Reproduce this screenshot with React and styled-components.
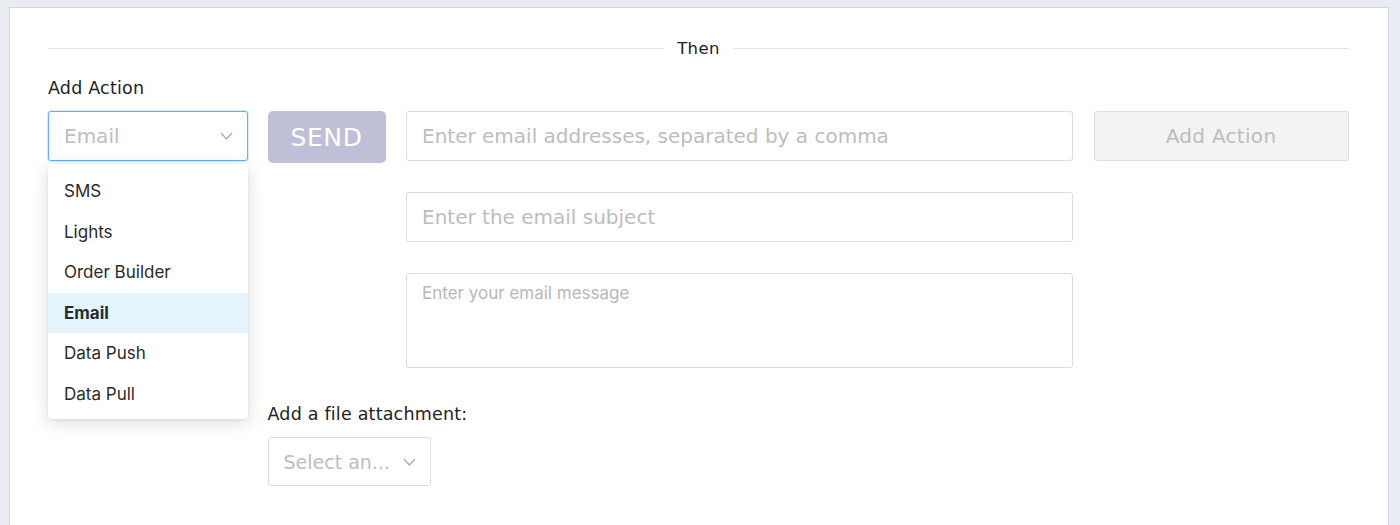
import React from "react";
import styled, { createGlobalStyle } from "styled-components";

const GlobalStyle = createGlobalStyle`
  body {
    margin: 0;
    background: #e9ecf2;
    font-family: "DejaVu Sans", "Open Sans", sans-serif;
  }
  * { box-sizing: border-box; }
`;

const Page = styled.div`
  padding: 7px 11px 0 9px;
  height: 525px;
  overflow: hidden;
`;

const Panel = styled.div`
  background: #fff;
  border: 1px solid #d2d3e5;
  border-bottom: none;
  min-height: 600px;
  padding: 30px 39px 0 38px;
`;

const Divider = styled.div`
  display: flex;
  align-items: center;
  gap: 13px;
  height: 20px;
  margin-bottom: 20px;
  font-size: 16.5px;
  letter-spacing: 0.4px;
  color: #222;
  &::before,
  &::after {
    content: "";
    flex: 1;
    height: 1px;
    background: #e3e3e6;
  }
`;

const Label = styled.div`
  font-size: 17.5px;
  line-height: 20px;
  letter-spacing: 0.2px;
  color: #222;
  margin-bottom: 13px;
`;

const Grid = styled.div`
  display: grid;
  grid-template-columns: 200px 117px 667px 255px;
  grid-template-rows: 50px 50px 95px auto;
  column-gap: 20.5px;
  row-gap: 31px;
  align-items: start;
`;

const SelectBox = styled.div`
  position: relative;
  width: ${(p) => p.width || "100%"};
  height: ${(p) => p.height || 50}px;
  display: flex;
  align-items: center;
  justify-content: space-between;
  padding: 0 14px 0 15px;
  border: 1px solid ${(p) => (p.focused ? "#62b0f4" : "#dcdcdc")};
  border-radius: 3px;
  box-shadow: ${(p) => (p.focused ? "0 0 0 1px rgba(98,176,244,0.25)" : "none")};
  background: #fff;
  font-size: ${(p) => p.size || 20}px;
  color: #bdbdbd;
  white-space: nowrap;
`;

const Chevron = () => (
  <svg width="13" height="8" viewBox="0 0 13 8" fill="none">
    <path d="M1 1l5.5 6L12 1" stroke="#a8a8a8" strokeWidth="1.2" />
  </svg>
);

const SendButton = styled.button`
  height: 52px;
  margin-left: -1px;
  border: none;
  border-radius: 5px;
  background: #bfc0d7;
  color: #fff;
  font-family: inherit;
  font-size: 25px;
  letter-spacing: 0.6px;
  padding: 0;
`;

const TextInput = styled.input`
  grid-column: 3;
  height: 50px;
  width: 100%;
  border: 1px solid #dcdcdc;
  border-radius: 3px;
  padding: 0 15px;
  font-family: inherit;
  font-size: 20px;
  outline: none;
  &::placeholder {
    color: #bdbdbd;
  }
`;

const MessageArea = styled.textarea`
  grid-column: 3;
  height: 95px;
  width: 100%;
  border: 1px solid #dcdcdc;
  border-radius: 3px;
  padding: 9px 15px;
  resize: none;
  font-family: Inter, "Liberation Sans", sans-serif;
  font-size: 17px;
  outline: none;
  &::placeholder {
    color: #b8b8b8;
  }
`;

const AddActionButton = styled.button`
  height: 50px;
  border: 1px solid #dedede;
  border-radius: 3px;
  background: #f3f3f3;
  color: #bdbdbd;
  font-family: inherit;
  font-size: 20px;
  letter-spacing: 0.3px;
`;

const Attachment = styled.div`
  grid-column: 2 / 5;
  margin-top: 5px;
  margin-left: -1px;
`;

const Menu = styled.ul`
  position: absolute;
  top: 52px;
  left: -1px;
  width: 200px;
  margin: 0;
  padding: 7px 0 5px;
  list-style: none;
  background: #fff;
  border-radius: 4px;
  box-shadow: 0 4px 18px rgba(0, 0, 0, 0.14), 0 1px 3px rgba(0, 0, 0, 0.06);
  z-index: 10;
`;

const MenuItem = styled.li`
  height: 40.5px;
  display: flex;
  align-items: center;
  padding-left: 16px;
  font-family: Inter, "Liberation Sans", sans-serif;
  font-size: 17px;
  font-weight: ${(p) => (p.active ? 700 : 400)};
  color: #2a2a2a;
  background: ${(p) => (p.active ? "#e3f4fd" : "transparent")};
`;

const actions = ["SMS", "Lights", "Order Builder", "Email", "Data Push", "Data Pull"];

export default function App() {
  return (
    <Page>
      <GlobalStyle />
      <Panel>
        <Divider>Then</Divider>
        <Label>Add Action</Label>
        <Grid>
          <SelectBox focused>
            <span>Email</span>
            <Chevron />
            <Menu>
              {actions.map((a) => (
                <MenuItem key={a} active={a === "Email"}>
                  {a}
                </MenuItem>
              ))}
            </Menu>
          </SelectBox>
          <SendButton>SEND</SendButton>
          <TextInput placeholder="Enter email addresses, separated by a comma" />
          <AddActionButton>Add Action</AddActionButton>
          <TextInput placeholder="Enter the email subject" />
          <MessageArea placeholder="Enter your email message" />
          <Attachment>
            <Label>Add a file attachment:</Label>
            <SelectBox width="163px" height={49} size={19}>
              <span>Select an...</span>
              <Chevron />
            </SelectBox>
          </Attachment>
        </Grid>
      </Panel>
    </Page>
  );
}
